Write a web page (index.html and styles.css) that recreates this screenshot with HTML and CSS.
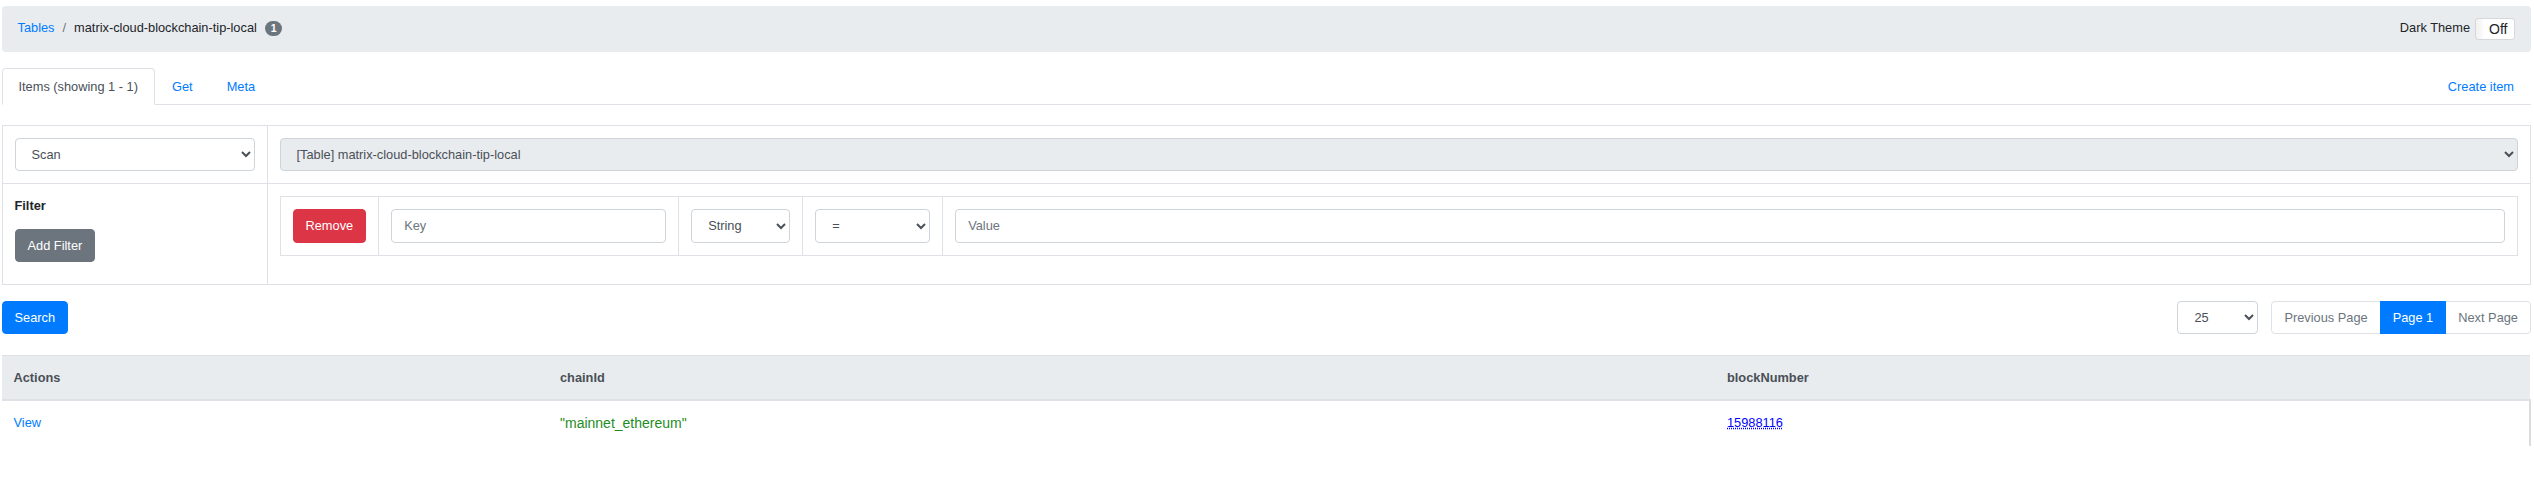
FILE: index.html
```html
<!DOCTYPE html>
<html lang="en">
<head>
<meta charset="utf-8">
<title>matrix-cloud-blockchain-tip-local</title>
<link rel="stylesheet" href="styles.css">
</head>
<body>
<div class="page">
  <nav class="crumbbar">
    <ol class="crumbs">
      <li><a href="#" class="link">Tables</a></li>
      <li class="sep">/</li>
      <li class="current">matrix-cloud-blockchain-tip-local<span class="badge">1</span></li>
    </ol>
    <div class="theme">
      <span class="theme-label">Dark Theme</span>
      <span class="toggle">Off</span>
    </div>
  </nav>

  <ul class="tabs">
    <li><a href="#" class="tab active">Items (showing 1 - 1)</a></li>
    <li><a href="#" class="tab">Get</a></li>
    <li><a href="#" class="tab">Meta</a></li>
    <li class="tab-right"><a href="#" class="tab">Create item</a></li>
  </ul>

  <table class="grid filter-grid">
    <tr>
      <td class="side-cell">
        <select class="control">
          <option>Scan</option>
        </select>
      </td>
      <td>
        <select class="control" disabled>
          <option>[Table] matrix-cloud-blockchain-tip-local</option>
        </select>
      </td>
    </tr>
    <tr>
      <td class="side-cell">
        <div class="filter-label">Filter</div>
        <button class="btn btn-gray">Add Filter</button>
      </td>
      <td>
        <table class="grid inner-grid">
          <tr>
            <td class="shrink"><button class="btn btn-red">Remove</button></td>
            <td class="shrink"><input class="control key-input" placeholder="Key"></td>
            <td class="shrink">
              <select class="control type-select">
                <option>String</option>
              </select>
            </td>
            <td class="shrink">
              <select class="control op-select">
                <option>=</option>
              </select>
            </td>
            <td><input class="control" placeholder="Value"></td>
          </tr>
        </table>
      </td>
    </tr>
  </table>

  <div class="search-row">
    <button class="btn btn-blue">Search</button>
    <div class="paging">
      <select class="control per-page">
        <option>25</option>
      </select>
      <ul class="pager">
        <li class="page-item disabled">Previous Page</li>
        <li class="page-item active">Page 1</li>
        <li class="page-item disabled">Next Page</li>
      </ul>
    </div>
  </div>

  <table class="results">
    <thead>
      <tr>
        <th class="col-actions">Actions</th>
        <th class="col-chain">chainId</th>
        <th>blockNumber</th>
      </tr>
    </thead>
    <tbody>
      <tr>
        <td><a href="#" class="link">View</a></td>
        <td><span class="str">"mainnet_ethereum"</span></td>
        <td class="last"><abbr class="num" title="Number">15988116</abbr></td>
      </tr>
    </tbody>
  </table>
</div>
</body>
</html>
```

FILE: styles.css
```css
* { box-sizing: border-box; }

html, body {
  margin: 0;
  padding: 0;
  background: #fff;
}

body {
  font-family: "Liberation Sans", Arial, sans-serif;
  font-size: 12.8px;
  line-height: 1.5;
  color: #212529;
}

.page {
  padding: 6px 3px 0 1.5px;
}

.link {
  color: #007bff;
  text-decoration: none;
}

/* breadcrumb bar */
.crumbbar {
  display: flex;
  align-items: flex-start;
  justify-content: space-between;
  background: #e9ecef;
  border-radius: 4px;
  padding: 12px 16px;
}

.crumbs {
  display: flex;
  align-items: center;
  list-style: none;
  margin: 0;
  padding: 0;
  height: 19.2px;
}

.crumbs li {
  display: flex;
  align-items: center;
}

.sep {
  color: #6c757d;
  padding: 0 8px;
}

.current {
  color: #212529;
}

.badge {
  display: inline-block;
  margin-left: 8px;
  min-width: 17.5px;
  height: 15px;
  padding: 0 5px;
  font-size: 10.5px;
  font-weight: 700;
  line-height: 15px;
  text-align: center;
  color: #fff;
  background: #6c757d;
  border-radius: 10px;
  margin-top: 2px;
}

.theme {
  display: flex;
  align-items: flex-start;
}

.theme-label {
  margin-right: 5px;
}

.toggle {
  display: inline-block;
  height: 21.5px;
  width: 40px;
  padding: 0 7px 0 13px;
  font-size: 14px;
  line-height: 20px;
  text-align: right;
  color: #212529;
  background: linear-gradient(to right, #f1f1f1 0, #f8f8f8 5px, #fff 8px);
  border: 1px solid #d6d8db;
  border-radius: 3px;
}

/* tabs */
.tabs {
  display: flex;
  list-style: none;
  margin: 16px 0 0;
  padding: 0;
  border-bottom: 1px solid #dee2e6;
}

.tabs li {
  margin-bottom: -1px;
}

.tab {
  display: block;
  padding: 8px 16px;
  color: #007bff;
  text-decoration: none;
  border: 1px solid transparent;
  border-radius: 4px 4px 0 0;
}

.tab.active {
  color: #495057;
  background: #fff;
  border-color: #dee2e6 #dee2e6 #fff;
}

.tab-right {
  margin-left: auto;
}

/* tables with borders */
.grid {
  width: 100%;
  border-collapse: collapse;
  margin-bottom: 16px;
}

.grid td {
  border: 1px solid #dee2e6;
  padding: 12px;
  vertical-align: top;
}

.filter-grid {
  margin-top: 20.5px;
}

.side-cell {
  width: 265px;
}

.shrink {
  width: 1px;
  white-space: nowrap;
}

.filter-label {
  font-weight: 700;
  margin-bottom: 13px;
}

/* form controls */
.control {
  display: block;
  width: 100%;
  height: 33.2px;
  padding: 6px 12px;
  font-family: inherit;
  font-size: 12.8px;
  line-height: 1.5;
  color: #495057;
  background-color: #fff;
  border: 1px solid #ced4da;
  border-radius: 4px;
}

.control::placeholder {
  color: #6c757d;
  opacity: 1;
}

.control:disabled {
  background-color: #e9ecef;
  opacity: 1;
  color: #495057;
}

.key-input { width: 275px; }
.type-select { width: 99px; }
.op-select { width: 115px; }

/* buttons */
.btn {
  display: inline-block;
  padding: 6px 12px;
  font-family: inherit;
  font-size: 12.8px;
  line-height: 1.5;
  color: #fff;
  border: 1px solid transparent;
  border-radius: 4px;
  cursor: pointer;
}

.btn-gray { background: #6c757d; border-color: #6c757d; }
.btn-red { background: #dc3545; border-color: #dc3545; }
.btn-blue { background: #007bff; border-color: #007bff; }

/* search row */
.search-row {
  display: flex;
  justify-content: space-between;
  align-items: flex-start;
}

.paging {
  display: flex;
  align-items: flex-start;
}

.per-page {
  width: 81px;
  margin-right: 13px;
}

.pager {
  display: flex;
  list-style: none;
  margin: 0;
  padding: 0;
}

.page-item {
  padding: 6px 12px;
  line-height: 1.5;
  border: 1px solid #dee2e6;
  margin-left: -1px;
  background: #fff;
}

.page-item:first-child {
  margin-left: 0;
  border-radius: 4px 0 0 4px;
}

.page-item:last-child {
  border-radius: 0 4px 4px 0;
}

.page-item.disabled {
  color: #6c757d;
}

.page-item.active {
  color: #fff;
  background: #007bff;
  border-color: #007bff;
  position: relative;
}

/* results table */
.results {
  width: 100%;
  border-collapse: collapse;
  margin-top: 21px;
}

.results th {
  text-align: left;
  font-weight: 700;
  color: #495057;
  background: #e9ecef;
  padding: 12px;
  border-top: 1px solid #dee2e6;
  border-bottom: 2px solid #dee2e6;
}

.results td {
  padding: 12px;
  vertical-align: top;
}

.col-actions { width: 546.5px; }
.col-chain { width: 1167px; }

.results td.last {
  border-right: 2px solid #dcdcdc;
}

.str {
  font-size: 14px;
  color: #1e8c1e;
}

.num {
  color: #0000ff;
  text-decoration: underline dotted;
}
```
